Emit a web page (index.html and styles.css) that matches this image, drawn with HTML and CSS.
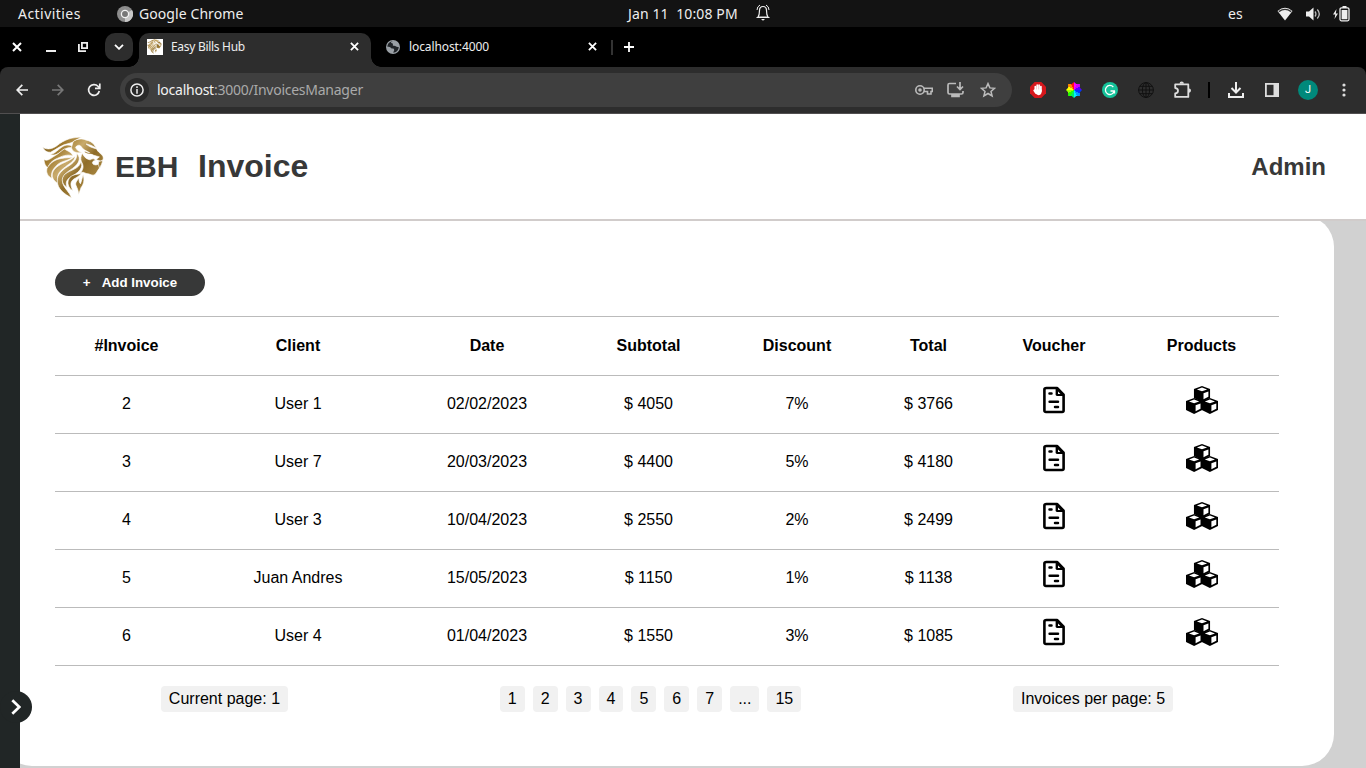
FILE: index.html
```html
<!DOCTYPE html>
<html lang="en">
<head>
<meta charset="utf-8">
<title>Easy Bills Hub</title>
<link rel="stylesheet" href="styles.css">
</head>
<body>
<svg class="defs" width="0" height="0">
  <defs>
    <linearGradient id="gold" gradientUnits="userSpaceOnUse" x1="45" y1="50" x2="205" y2="190"><stop offset="0" stop-color="#80601f"/><stop offset=".2" stop-color="#a07a2e"/><stop offset=".42" stop-color="#c9ab6c"/><stop offset=".62" stop-color="#8f6d29"/><stop offset="1" stop-color="#b4924b"/></linearGradient>
    <symbol id="lion" viewBox="36 30 190 190">
      <g fill="url(#gold)" stroke="#fff" stroke-width="2">
        <path d="M38 65C54 72 66 69 80 60C104 40 129 33 156 34C140 40 132 49 119 52C94 56 79 71 62 79C51 80 44 75 38 65Z"/>
        <path d="M60 86C76 84 84 70 100 61C113 54 126 57 132 67C119 62 108 67 98 74C84 86 72 90 60 86Z"/>
        <path d="M130 47C143 37 158 37 168 42C179 44 188 49 192 55L200 66C187 59 179 56 169 54C176 61 188 66 201 69C202 74 206 77 211 82C219 88 223 94 220 102L213 106L199 101C204 97 207 95 209 93C196 89 187 88 179 80C169 74 160 72 154 62C150 56 143 57 137 64C141 72 146 78 157 79C140 84 126 77 125 64Z"/>
        <path d="M158 82C163 94 169 99 181 102C188 98 193 97 197 103C188 106 185 111 192 116C200 119 206 116 208 112L213 123C206 128 204 137 196 146C188 152 180 143 169 143C162 140 159 137 152 142C164 126 160 116 155 108C151 99 153 90 158 82Z"/>
        <path d="M207 107L219 104C217 114 214 120 209 126L206 115Z"/>
        <path d="M104 69C113 76 124 77 130 91C118 85 101 88 88 95C71 102 59 109 54 126C47 122 42 112 42 100C51 109 64 96 76 89C87 83 94 74 104 69Z"/>
        <path d="M128 93C116 107 96 103 81 118C69 130 62 140 66 158C53 151 48 141 51 128C60 111 77 100 94 98C108 95 118 96 128 93Z"/>
        <path d="M136 90C134 107 120 111 108 122C86 138 77 150 86 174C67 164 64 151 69 138C76 122 96 114 110 107C122 101 130 97 136 90Z"/>
        <path d="M141 82C156 98 146 114 129 127C108 141 94 152 99 174C104 190 119 198 125 217C104 205 82 190 82 166C81 147 97 132 114 122C132 111 142 100 141 82Z"/>
        <path d="M153 108C162 123 148 139 130 149C113 158 104 168 112 185C94 174 93 158 105 145C124 131 149 129 153 108Z"/>
        <path d="M155 143C148 151 140 155 132 160C121 168 121 178 129 194L123 191C113 180 111 167 120 155C131 144 146 146 155 143Z"/>
        <path d="M160 147C166 165 160 178 154 185L146 208C147 195 142 188 139 180C134 170 145 162 148 156C147 167 149 171 152 174C156 166 156 157 160 147Z"/>
      </g>
      <path d="M165 78Q175 84 187 83" fill="none" stroke="#9b7834" stroke-width="2.500"/>
    </symbol>
    <symbol id="doc" viewBox="0 0 22 28">
      <path d="M3.5 2H14L20.6 8.6V24.500Q20.600 26 19.100 26H3Q1.400 26 1.400 24.500V3.500Q1.400 2 3.500 2Z" fill="#fff" stroke="#000" stroke-width="2.600" stroke-linejoin="round"/>
      <path d="M12.600 1.500L21 10H14Q12.600 10 12.600 8.600Z"/>
      <path d="M15 5.600L17.400 8H15Z" fill="#fff"/>
      <path d="M6.500 7.600H8.500M6.600 15.800H15M12 20.900H15" fill="none" stroke="#000" stroke-width="2.500" stroke-linecap="round"/>
    </symbol>
    <symbol id="cube" viewBox="0 0 17 16">
      <path d="M8.500 0L16.600 3V11.900L8.500 16L.4 11.900V3Z"/>
      <path d="M8.500 1.500L13.600 3.400L8.500 5.300L3.400 3.400ZM10 7.300L14.900 5.400V10.800L10 13.300Z" fill="#fff"/>
    </symbol>
    <symbol id="cubes" viewBox="0 0 32 28">
      <use href="#cube" x="-.4" y="12" width="17" height="16"/>
      <use href="#cube" x="15.400" y="12" width="17" height="16"/>
      <use href="#cube" x="7.500" y="0" width="17" height="16"/>
    </symbol>
    <symbol id="x" viewBox="0 0 10 10"><path d="M1 1L9 9M9 1L1 9" stroke="#fff" stroke-width="2"/></symbol>
  </defs>
</svg>

<div class="sysbar">
  <span class="activities">Activities</span>
  <span class="app"><svg width="16" height="16" viewBox="0 0 16 16"><circle cx="8" cy="8" r="8" fill="#8d8d8d"/><path d="M8 8L15 4A8 8 0 0 1 8 16Z" fill="#c8c8c8"/><circle cx="8" cy="8" r="3.600" fill="#777" stroke="#f2f2f2" stroke-width="1.300"/></svg><span class="appname">Google Chrome</span></span>
  <span class="clock">Jan 11&nbsp; 10:08 PM</span>
  <svg class="bell" width="14" height="17" viewBox="0 0 14 17" fill="none" stroke="#eee"><path d="M2 13Q3.500 11 3.500 6.500Q3.500 2.500 7 2.500T10.500 6.500Q10.500 11 12 13Z" stroke-width="1.200"/><path d="M1 6Q1 2.500 4 1M13 6Q13 2.500 10 1M.5 13.500H13.500"/><path d="M5 15H9L7 16.800Z" fill="#eee" stroke="none"/></svg>
  <span class="lang">es</span>
  <svg class="wifi" width="16" height="14" viewBox="0 0 16 14"><path d="M.5 4Q8-2.500 15.500 4L8 13.500Z" fill="#eee"/><path d="M1.800 4.600Q8 .2 14.200 4.600" fill="none" stroke="#333" stroke-width="1.300"/></svg>
  <svg class="vol" width="15" height="14" viewBox="0 0 15 14"><path d="M0 4.500H3L7.500.5V13.500L3 9.500H0Z" fill="#eee"/><path d="M9 4.500Q10.800 7 9 9.500M11.300 2.500Q15.300 7 11.300 11.500" fill="none" stroke="#bbb" stroke-width="1.300"/></svg>
  <svg class="bat" width="17" height="16" viewBox="0 0 17 16"><path d="M3.500 3L0 8.500H2.300L1.500 13L5 7.500H2.800Z" fill="#eee"/><rect x="7" y="1.800" width="9" height="13" rx="1.500" fill="none" stroke="#eee" stroke-width="1.300"/><path d="M9.500 0H13.500V2H9.500ZM8.600 4H14.400V13.300H8.600Z" fill="#eee"/></svg>
</div>

<div class="tabstrip">
  <svg class="wclose" width="10" height="10"><use href="#x"/></svg>
  <span class="wmin"></span>
  <svg class="wmax" width="10" height="10" viewBox="0 0 10 10" fill="none" stroke="#eee" stroke-width="1.800"><path d="M3.900 .9H9.100V6.100H3.900ZM.9 2V9.100H8"/></svg>
  <span class="chev"><svg width="10" height="6" viewBox="0 0 10 6"><path d="M1 .8L5 4.800L9 .8" fill="none" stroke="#fff" stroke-width="1.800"/></svg></span>
  <div class="tab active">
    <span class="favicon"><svg width="15" height="15"><use href="#lion"/></svg></span><span class="tabname t1">Easy Bills Hub</span>
    <svg class="tclose" width="9" height="9"><use href="#x"/></svg>
  </div>
  <div class="tab other">
    <svg width="14" height="14" viewBox="0 0 14 14"><circle cx="7" cy="7" r="7" fill="#9aa0a6"/><path d="M7 1.300C4 1.800 5 3 6.500 3.500C8 4 5.500 5.500 8 5.800C10.500 6 10 7.500 12.700 7C12.700 10.500 10 12.800 7 12.600C8.800 10.500 8.500 8.500 6.500 8.500C4.500 8.500 5 6.700 1.400 6.800C1.600 3.500 4 1.200 7 1.300Z" fill="#202428"/><path d="M8 1.400Q8.300 3 10 3.800L12.300 5.500Q11.300 2 8 1.400Z" fill="#9aa0a6"/></svg><span class="tabname t2">localhost:4000</span>
    <svg class="tclose" width="9" height="9"><use href="#x"/></svg>
  </div>
  <span class="tabsep"></span>
  <svg class="plus" width="10" height="10" viewBox="0 0 10 10"><path d="M5 0V10M0 5H10" stroke="#fff" stroke-width="1.800"/></svg>
</div>

<div class="toolbar-bg"><div class="toolbar">
  <svg class="back" width="12" height="12" viewBox="0 0 12 12" fill="none" stroke="#eee" stroke-width="1.700"><path d="M12 6H1.300M6.300 .8L1.200 6L6.300 11.200"/></svg>
  <svg class="fwd" width="12" height="12" viewBox="0 0 12 12" fill="none" stroke="#777" stroke-width="1.700"><path d="M0 6H10.700M5.700 .8L10.800 6L5.700 11.200"/></svg>
  <svg class="reload" width="14" height="14" viewBox="0 0 14 14" fill="none" stroke="#eee" stroke-width="1.700"><path d="M12.300 8A5.400 5.400 0 1 1 11 3.300L12.500 5"/><path d="M12.800 .5V5.300H8"/></svg>
  <div class="omnibox">
    <span class="info"><svg width="14" height="14" viewBox="0 0 14 14"><circle cx="7" cy="7" r="6.100" fill="none" stroke="#eee" stroke-width="1.500"/><path d="M7 3.300V5M7 6V10.700" stroke="#eee" stroke-width="1.500"/></svg></span>
    <span class="url">localhost<span>:3000/InvoicesManager</span></span>
    <svg class="key" width="18" height="12" viewBox="0 0 18 12" fill="none" stroke="#bbb" stroke-width="1.600"><circle cx="5" cy="6" r="4.200"/><circle cx="5" cy="6" r="1" fill="#bbb"/><path d="M9 4.300H17.300V7.500H16V10H12.500V7.500H9"/></svg>
    <svg class="inst" width="17" height="16" viewBox="0 0 17 16" fill="none" stroke="#bbb" stroke-width="1.700"><path d="M9 1.500H2.500Q1 1.500 1 3V10.500Q1 12 2.500 12H14.500Q16 12 16 10.500V9M13 0V7M10 4.500L13 7.500L16 4.500"/><path d="M5 12V14.500H12V12" fill="#bbb"/></svg>
    <svg width="16" height="16" viewBox="0 0 16 16" fill="none" stroke="#bbb" stroke-width="1.500"><path d="M8 1.600L9.900 5.900L14.500 6.300L11 9.400L12.100 14L8 11.500L3.900 14L5 9.400L1.500 6.300L6.100 5.900Z"/></svg>
  </div>
  <div class="exts">
    <svg width="16" height="16" viewBox="0 0 16 16"><path d="M4.700 0H11.300L16 4.700V11.300L11.300 16H4.700L0 11.300V4.700Z" fill="#d5171c"/><path d="M5.300 4.500V9M7.200 3.200V8M9.100 3.200V8M10.900 4.500V9M4.200 8.500L6 11" stroke="#fff" stroke-width="1.700" stroke-linecap="round"/><path d="M4.500 7.500H11.700V10Q11 13.300 8.300 13.300Q6.500 13.300 4.500 10Z" fill="#fff"/></svg>
    <span class="wheelbox"><span class="wheel"></span></span>
    <svg width="16" height="16" viewBox="0 0 16 16" fill="none" stroke="#fff" stroke-width="1.300"><circle cx="8" cy="8" r="8" fill="#15c39a" stroke="none"/><path d="M11.300 5A4.500 4.500 0 1 0 12.300 9H8.500M12.500 9V11.500"/></svg>
    <svg width="16" height="16" viewBox="0 0 16 16" fill="none" stroke="#111" stroke-width="1"><circle cx="8" cy="8" r="7.400"/><ellipse cx="8" cy="8" rx="3.600" ry="7.400"/><path d="M8 .5V15.500M.6 8H15.400M2 4.300H14M2 11.700H14"/></svg>
    <svg width="17" height="18" viewBox="0 0 17 18" fill="none" stroke="#ddd" stroke-width="1.800"><path d="M1.200 3.400H14.300V15.900H1.200V12.400Q4 12 4 9.700T1.200 7Z" stroke-linejoin="round"/><path d="M5.500 2.700Q5.500 .5 7.700 .5T9.900 2.700ZM15 7.500Q17 7.500 17 9.600T15 11.800Z" fill="#ddd" stroke="none"/></svg>
    <span class="extsep"></span>
    <svg width="16" height="16" viewBox="0 0 16 16" fill="none" stroke="#eee" stroke-width="2"><path d="M8 0V10M3.500 6L8 10.500L12.500 6M1 11V15H15V11"/></svg>
    <svg width="14" height="14" viewBox="0 0 14 14"><rect x=".9" y=".9" width="12.200" height="12.200" fill="none" stroke="#ddd" stroke-width="1.800"/><path d="M8.500 0H14V14H8.500Z" fill="#ddd"/></svg>
    <span class="avatar">J</span>
    <svg width="4" height="16" viewBox="0 0 4 16" fill="#ddd"><circle cx="2" cy="3" r="1.600"/><circle cx="2" cy="8" r="1.600"/><circle cx="2" cy="13" r="1.600"/></svg>
  </div>
</div></div>

<div class="page">
  <aside class="sidebar"><button class="expand"><svg width="10" height="16" viewBox="0 0 10 16"><path d="M1.300 1.300L8.300 8L1.300 14.700" fill="none" stroke="#fff" stroke-width="2.700"/></svg></button></aside>
  <div class="content">
    <header class="header">
      <svg class="logo" width="63" height="63"><use href="#lion"/></svg>
      <span class="brand">EBH</span><h1>Invoice</h1><span class="role">Admin</span>
    </header>
    <main class="card">
      <button class="add"><span>+</span>Add Invoice</button>
      <table>
        <colgroup><col class="c1"><col class="c2"><col class="c3"><col class="c4"><col class="c5"><col class="c6"><col class="c7"><col></colgroup>
        <thead><tr><th>#Invoice</th><th>Client</th><th>Date</th><th>Subtotal</th><th>Discount</th><th>Total</th><th>Voucher</th><th>Products</th></tr></thead>
        <tbody>
          <tr><td>2</td><td>User 1</td><td>02/02/2023</td><td>$ 4050</td><td>7%</td><td>$ 3766</td><td><svg width="22" height="28"><use href="#doc"/></svg></td><td><svg width="32" height="28"><use href="#cubes"/></svg></td></tr>
          <tr><td>3</td><td>User 7</td><td>20/03/2023</td><td>$ 4400</td><td>5%</td><td>$ 4180</td><td><svg width="22" height="28"><use href="#doc"/></svg></td><td><svg width="32" height="28"><use href="#cubes"/></svg></td></tr>
          <tr><td>4</td><td>User 3</td><td>10/04/2023</td><td>$ 2550</td><td>2%</td><td>$ 2499</td><td><svg width="22" height="28"><use href="#doc"/></svg></td><td><svg width="32" height="28"><use href="#cubes"/></svg></td></tr>
          <tr><td>5</td><td>Juan Andres</td><td>15/05/2023</td><td>$ 1150</td><td>1%</td><td>$ 1138</td><td><svg width="22" height="28"><use href="#doc"/></svg></td><td><svg width="32" height="28"><use href="#cubes"/></svg></td></tr>
          <tr><td>6</td><td>User 4</td><td>01/04/2023</td><td>$ 1550</td><td>3%</td><td>$ 1085</td><td><svg width="22" height="28"><use href="#doc"/></svg></td><td><svg width="32" height="28"><use href="#cubes"/></svg></td></tr>
        </tbody>
      </table>
      <div class="pager">
        <span class="chip">Current page: 1</span>
        <nav class="pages"><span class="chip">1</span><span class="chip">2</span><span class="chip">3</span><span class="chip">4</span><span class="chip">5</span><span class="chip">6</span><span class="chip">7</span><span class="chip">...</span><span class="chip">15</span></nav>
        <span class="chip">Invoices per page: 5</span>
      </div>
    </main>
  </div>
</div>
</body>
</html>
```
FILE: styles.css
```css
* { box-sizing: border-box; }
body { margin: 0; width: 1366px; height: 768px; overflow: hidden; display: flex; flex-direction: column; font: 16px "Liberation Sans", Arial, sans-serif; color: #000; background: #000; }
svg { display: block; flex: none; }
.defs { position: absolute; }

.sysbar { height: 27px; flex: none; background: #131313; color: #eee; display: flex; align-items: center; padding-left: 18px; font: 14px/27px "Noto Sans", sans-serif; white-space: nowrap; }
.activities { width: 99px; letter-spacing: .45px; }
.app { display: flex; align-items: center; gap: 6px; width: 511px; }
.appname { letter-spacing: .08px; }
.clock { width: 128px; letter-spacing: .12px; }
.bell { margin-top: -2px; }
.lang { margin-left: 458px; width: 49px; }
.wifi { margin-right: 13px; }
.vol { margin-right: 12px; }

.tabstrip { height: 40px; flex: none; display: flex; align-items: center; padding-left: 12px; color: #eee; }
.wmin { width: 10px; height: 2px; background: #eee; margin: 8px 22px 0 24px; }
.chev { width: 28px; height: 28px; border-radius: 10px; background: #2d2d2d; display: flex; align-items: center; justify-content: center; margin: 0 6px 0 17px; }
.tab { height: 34px; align-self: flex-end; display: flex; align-items: center; font: 12px/16px "Noto Sans", sans-serif; }
.tab.other { width: 226px; padding: 0 0 7px 15px; }
.tab.active { position: relative; width: 232px; padding: 0 0 7px 8px; background: #2d2d2d; border-radius: 10px 10px 0 0; }
.tab.active::before, .tab.active::after { content: ""; position: absolute; bottom: 0; width: 10px; height: 10px; }
.tab.active::before { left: -10px; background: radial-gradient(circle at 0 0, transparent 9.5px, #2d2d2d 10px); }
.tab.active::after { right: -10px; background: radial-gradient(circle at 100% 0, transparent 9.5px, #2d2d2d 10px); }
.favicon { width: 16px; height: 16px; background: #fff; }
.tabname { margin-left: 8px; white-space: nowrap; }
.t1 { letter-spacing: -.3px; }
.t2 { letter-spacing: -.1px; margin-left: 9px; }
.tclose { margin-left: auto; margin-right: 12px; }
.other .tclose { margin-right: 0; }
.tabsep { width: 2px; height: 15px; background: #333; margin: 0 11px 0 14px; }

.toolbar-bg { flex: none; height: 47px; background: #000; }
.toolbar { height: 47px; background: #2d2d2d; border-bottom: 1px solid #514f50; border-radius: 8px 8px 0 0; display: flex; align-items: center; padding-left: 16px; }
.fwd { margin-left: 24px; }
.reload { margin-left: 23px; }
.omnibox { width: 892px; height: 34px; border-radius: 17px; background: #3f3f3f; margin-left: 19px; display: flex; align-items: center; padding: 0 16px 0 5px; }
.info { width: 24px; height: 24px; border-radius: 50%; background: #292929; display: flex; align-items: center; justify-content: center; }
.url { margin-left: 8px; font: 14px/20px "Noto Sans", sans-serif; color: #f2f2f2; white-space: nowrap; letter-spacing: -.25px; }
.url span { color: #aaa; }
.key { margin-left: auto; margin-right: 14px; }
.inst { margin-right: 16px; }
.exts { display: grid; grid-template-columns: 36px 36px 36px 36px 36px 18px 36px 36px 36px 36px; justify-items: center; align-items: center; margin-left: 8px; }
.wheelbox { width: 16px; height: 16px; display: flex; align-items: center; justify-content: center; }
.wheel { width: 16px; height: 16px; clip-path: polygon(50% 0, 64% 13%, 87% 13%, 87% 36%, 100% 50%, 87% 64%, 87% 87%, 64% 87%, 50% 100%, 36% 87%, 13% 87%, 13% 64%, 0 50%, 13% 36%, 13% 13%, 36% 13%); background: conic-gradient(#f0f 0 8%, #c0f 8% 16%, #50f 16% 25%, #03f 25% 34%, #09f 34% 42%, #0ef 42% 50%, #0e6 50% 59%, #2f0 59% 67%, #9f0 67% 75%, #ff0 75% 84%, #f80 84% 92%, #f11 92%); }
.extsep { width: 2px; height: 16px; background: #000; }
.avatar { width: 20px; height: 20px; border-radius: 50%; background: #00897b; color: #fff; font: 11px/20px Roboto, sans-serif; text-align: center; }

.page { flex: 1; min-height: 0; display: flex; background: #d1d1d1; }
.sidebar { width: 20px; flex: none; background: #212626; position: relative; z-index: 2; }
.expand { position: absolute; left: 0; top: 577px; width: 32px; height: 32px; border: 0; border-radius: 50%; background: #212626; padding: 0 0 0 11px; }
.content { flex: 1; min-width: 0; }
.header { position: relative; z-index: 1; height: 107px; background: #fff; border-bottom: 2px solid #d1cccb; display: flex; align-items: center; padding: 0 40px 0 22px; color: #373838; font-weight: bold; }
.logo { margin-top: 2px; }
.brand { font-size: 30px; margin-left: 10px; width: 83px; }
h1 { font-size: 32px; margin: 0; }
.role { margin-left: auto; font-size: 24px; }
.card { width: 1334px; height: 551px; margin: -6px 0 0 -20px; background: #fff; border-radius: 32px; padding: 54px 55px 0; }
.add { display: block; width: 150px; height: 27px; border: 0; border-radius: 14px; background: #373838; color: #fff; font: bold 13.333px "Liberation Sans", Arial, sans-serif; padding: 0; }
.add span { margin-right: 11px; }
table { width: 1224px; margin-top: 20px; border-collapse: separate; border-spacing: 0; table-layout: fixed; border-top: 1px solid #bbb; }
.c1 { width: 143px; } .c2 { width: 200px; } .c3 { width: 178px; } .c4 { width: 145px; } .c5 { width: 152px; } .c6 { width: 111px; } .c7 { width: 140px; }
th, td { padding: 0; text-align: center; height: 58px; border-bottom: 1px solid #bbb; }
th { height: 59px; }
td { padding-bottom: 2px; }
td svg { margin: -7px auto 0; }
.pager { width: 1224px; margin-top: 20px; display: flex; justify-content: space-around; }
.pages { display: flex; gap: 8px; }
.chip { background: #f1f1f1; border-radius: 4px; padding: 4px 8px; line-height: 18px; }
```
